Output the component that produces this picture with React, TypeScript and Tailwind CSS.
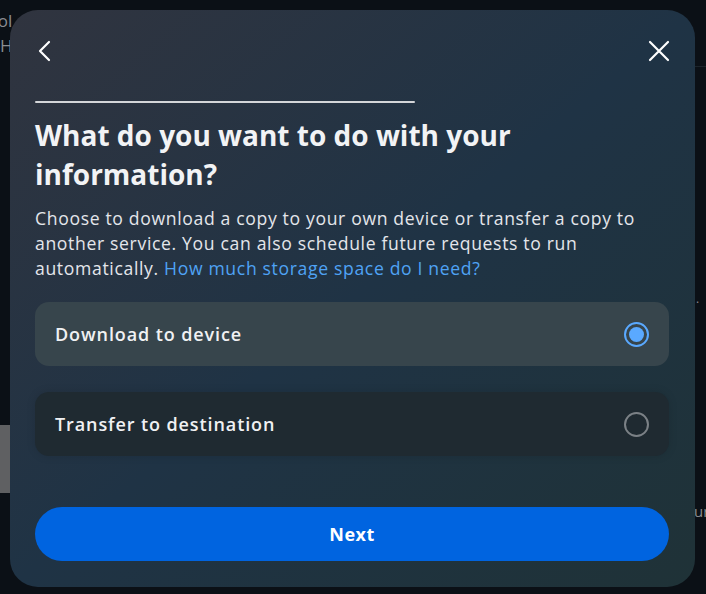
import React, { useState } from "react";

const options = [
  { id: "download", label: "Download to device" },
  { id: "transfer", label: "Transfer to destination" },
];

const App = () => {
  const [selected, setSelected] = useState("download");

  return (
    <div
      className="relative w-[706px] h-[594px] overflow-hidden bg-[#0b1016] text-white"
      style={{ fontFamily: '"Open Sans", "Noto Sans", sans-serif' }}
    >
      {/* page behind the dialog */}
      <div className="absolute left-[-22px] top-[8px] text-[17px] leading-[25px] text-[#8a8d91]">
        <div>Shol</div>
        <div className="pl-[22px]">H</div>
      </div>
      <div className="absolute left-0 top-[425px] w-[12px] h-[68px] bg-[#5f6062]" />
      <div className="absolute right-0 top-[66px] w-[14px] h-px bg-[#1c242b]" />
      <div className="absolute left-[696px] top-[290px] text-[12px] text-[#8a8d91]">.</div>
      <div className="absolute left-[694px] top-[500px] text-[15px] text-[#8a8d91]">ur</div>

      {/* dialog */}
      <div className="absolute left-[10px] top-[10px] w-[685px] h-[577px] rounded-[28px] bg-gradient-to-br from-[#30343f] via-[#1f3345] to-[#1f3237] pl-[25px] pr-[26px] pt-[28px] flex flex-col">
        <div className="flex items-center justify-between h-[24px] mt-[1px]">
          <button className="w-[24px] h-[24px] -ml-[2px] flex items-center justify-center">
            <svg width="24" height="24" viewBox="0 0 24 24" fill="none">
              <path d="M16 3 L7 12 L16 21" stroke="white" strokeWidth="2.2" strokeLinecap="round" strokeLinejoin="round" />
            </svg>
          </button>
          <button className="w-[24px] h-[24px] -mr-[2px] flex items-center justify-center">
            <svg width="24" height="24" viewBox="0 0 24 24" fill="none">
              <path d="M3 3 L21 21 M21 3 L3 21" stroke="white" strokeWidth="2.2" strokeLinecap="round" />
            </svg>
          </button>
        </div>

        <div className="mt-[38px] w-[380px] h-[2px] bg-[#d4d6d9] rounded-full" />

        <h1 className="mt-[13px] w-[580px] text-[28px] leading-[39px] font-bold text-[#f2f3f5]">
          What do you want to do with your information?
        </h1>

        <p className="mt-[12px] max-w-[634px] text-[17.6px] leading-[25px] tracking-[0.65px] text-[#e4e6eb]">
          Choose to download a copy to your own device or transfer a copy to another service. You can also
          schedule future requests to run automatically.{" "}
          <span className="text-[#4fa3f5]">How much storage space do I need?</span>
        </p>

        <div className="mt-[21px] flex flex-col gap-[26px]">
          {options.map((o) => {
            const on = selected === o.id;
            return (
              <button
                key={o.id}
                onClick={() => setSelected(o.id)}
                className={
                  on
                    ? "h-[64px] rounded-[14px] bg-[#37454c] px-[20px] flex items-center justify-between"
                    : "h-[64px] rounded-[14px] bg-[#1f2a31] px-[20px] flex items-center justify-between shadow-[0_0_10px_rgba(0,0,0,0.12)]"
                }
              >
                <span className="text-[18px] font-semibold tracking-[0.9px] text-[#f0f1f3]">{o.label}</span>
                {on ? (
                  <span className="w-[25px] h-[25px] rounded-full border-[2px] border-[#5aa9ff] flex items-center justify-center">
                    <span className="w-[15px] h-[15px] rounded-full bg-[#5aa9ff]" />
                  </span>
                ) : (
                  <span className="w-[25px] h-[25px] rounded-full border-[2px] border-[#7b8186]" />
                )}
              </button>
            );
          })}
        </div>

        <button className="mt-[51px] h-[54px] rounded-full bg-[#0064e0] text-[18px] font-bold tracking-[0.5px] text-white">
          Next
        </button>
      </div>
    </div>
  );
};

export default App;
